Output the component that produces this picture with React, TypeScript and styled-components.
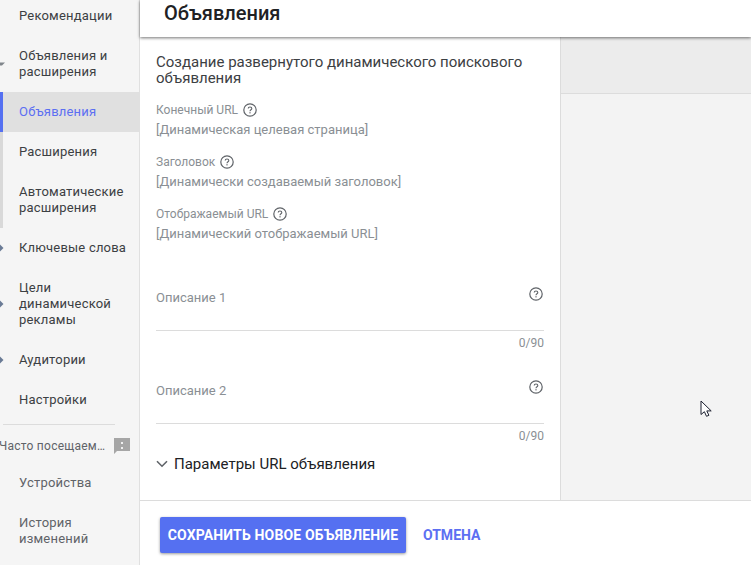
import React from "react";
import styled, { createGlobalStyle } from "styled-components";

const Global = createGlobalStyle`
  html, body {
    margin: 0;
    padding: 0;
    height: 100%;
    overflow: hidden;
    background: #fff;
    font-family: Roboto, "Liberation Sans", sans-serif;
  }
`;

const Page = styled.div`
  width: 751px;
  height: 565px;
  display: flex;
  overflow: hidden;
  position: relative;
`;

const Sidebar = styled.nav`
  width: 139px;
  flex: none;
  background: #f5f5f5;
  border-right: 1px solid #e0e0e0;
  overflow: hidden;
`;

const NavList = styled.div`
  margin-top: -4px;
  display: flex;
  flex-direction: column;
`;

const NavItem = styled.div<{ $state?: "active" | "child"; $muted?: boolean }>`
  position: relative;
  padding: 12px 8px 12px 16px;
  font-size: 13px;
  line-height: 16px;
  letter-spacing: 0.2px;
  color: ${(p) => (p.$state === "active" ? "#5c6ff2" : p.$muted ? "#5f6368" : "#3c4043")};
  background: ${(p) => (p.$state === "active" ? "#e0e0e0" : "transparent")};
  border-left: 3px solid
    ${(p) => (p.$state === "active" ? "#5570f1" : p.$state === "child" ? "#d9d9d9" : "transparent")};
`;

const Caret = styled.svg`
  position: absolute;
  left: -3px;
  top: 50%;
  margin-top: -5px;
`;

const Divider = styled.div`
  height: 1px;
  margin: 4px 24px 0 3px;
  background: #dcdcdc;
`;

const FrequentRow = styled.div`
  height: 38px;
  box-sizing: border-box;
  display: flex;
  align-items: center;
  justify-content: space-between;
  padding: 4px 9px 0 0;
  font-size: 12px;
  letter-spacing: 0.25px;
  color: #5f6368;
  white-space: nowrap;
`;

const FrequentLabel = styled.span`
  margin-left: -1px;
`;

const Main = styled.div`
  flex: 1;
  min-width: 0;
  display: flex;
  flex-direction: column;
`;

const Header = styled.header`
  height: 37px;
  flex: none;
  display: flex;
  align-items: center;
  padding: 0 0 12px 24px;
  box-sizing: border-box;
  background: #fff;
  box-shadow: 0 1px 3px rgba(0, 0, 0, 0.55);
  position: relative;
  z-index: 1;
  font-size: 20px;
  font-weight: 500;
  color: #202124;
`;

const Body = styled.div`
  flex: 1;
  min-height: 0;
  display: flex;
`;

const Form = styled.section`
  width: 421px;
  flex: none;
  box-sizing: border-box;
  padding: 17px 16px 0;
  border-right: 1px solid #dcdcdc;
  background: #fff;
`;

const Title = styled.h2`
  margin: 0 0 15px;
  font-size: 15px;
  line-height: 16px;
  font-weight: 400;
  color: #3c4043;
`;

const StaticField = styled.div`
  height: 52px;
`;

const FieldLabel = styled.div`
  height: 18px;
  display: flex;
  align-items: center;
  gap: 5px;
  font-size: 12px;
  color: #8a8f94;
`;

const FieldValue = styled.div`
  margin-top: 3px;
  font-size: 13px;
  line-height: 16px;
  color: #8a8f94;
`;

const Description = styled.div<{ $first?: boolean }>`
  margin-top: ${(p) => (p.$first ? "23px" : "0")};
  padding-top: ${(p) => (p.$first ? "0" : "23px")};
`;

const InputLine = styled.div`
  height: 51px;
  box-sizing: border-box;
  display: flex;
  justify-content: space-between;
  align-items: flex-start;
  border-bottom: 1px solid #dcdcdc;
  font-size: 13px;
  color: #8a8f94;
  padding-top: 9px;
  line-height: 18px;
`;

const HelpSlot = styled.span`
  margin-top: -2px;
  margin-right: 1px;
  display: flex;
`;

const Counter = styled.div`
  margin-top: 5px;
  text-align: right;
  font-size: 12px;
  line-height: 14px;
  color: #8a8f94;
`;

const Expander = styled.div`
  margin-top: 11px;
  display: flex;
  align-items: center;
  gap: 6px;
  font-size: 15px;
  line-height: 20px;
  color: #202124;
`;

const SidePanel = styled.aside`
  flex: 1;
  background: #f3f3f3;
`;

const SideBand = styled.div`
  height: 57px;
  background: #ececec;
  border-bottom: 1px solid #dcdcdc;
  box-sizing: border-box;
`;

const Footer = styled.footer`
  height: 65px;
  flex: none;
  box-sizing: border-box;
  display: flex;
  align-items: flex-start;
  gap: 17px;
  padding: 16px 0 0 20px;
  border-top: 1px solid #dcdcdc;
  background: #fff;
`;

const SaveButton = styled.button`
  height: 36px;
  width: 246px;
  padding: 0;
  border: 0;
  border-radius: 2px;
  background: #5570f1;
  color: #fff;
  font: 700 14px Roboto, sans-serif;
  letter-spacing: 0.15px;
  text-transform: uppercase;
  box-shadow: 0 1px 3px rgba(0, 0, 0, 0.4);
`;

const CancelButton = styled.button`
  height: 36px;
  padding: 0;
  border: 0;
  background: transparent;
  color: #5c6ff2;
  font: 700 14px Roboto, sans-serif;
  text-transform: uppercase;
`;

const Cursor = styled.svg`
  position: absolute;
  left: 700px;
  top: 400px;
`;

function HelpIcon() {
  return (
    <svg width="14" height="14" viewBox="0 0 14 14" fill="none">
      <circle cx="7" cy="7" r="6.2" stroke="#5f6368" strokeWidth="1.2" />
      <path
        d="M5.2 5.6C5.2 4.6 6 4 7 4s1.8.6 1.8 1.5C8.8 6.8 7 6.8 7 8.3"
        stroke="#5f6368"
        strokeWidth="1.1"
      />
      <rect x="6.4" y="9.2" width="1.2" height="1.2" fill="#5f6368" />
    </svg>
  );
}

function RightCaret() {
  return (
    <Caret width="4" height="10" viewBox="0 0 4 10">
      <path d="M0 1.5L3.5 5 0 8.5z" fill="#6a7b96" />
    </Caret>
  );
}

function DownCaret() {
  return (
    <Caret width="6" height="10" viewBox="0 0 6 10">
      <path d="M0 3.5h5L2 6.5H0z" fill="#80868b" />
    </Caret>
  );
}

export default function App() {
  return (
    <Page>
      <Global />
      <Sidebar>
        <NavList>
          <NavItem>Рекомендации</NavItem>
          <NavItem>
            <DownCaret />
            Объявления и расширения
          </NavItem>
          <NavItem $state="active">Объявления</NavItem>
          <NavItem $state="child">Расширения</NavItem>
          <NavItem $state="child">Автоматические расширения</NavItem>
          <NavItem>
            <RightCaret />
            Ключевые слова
          </NavItem>
          <NavItem>
            <RightCaret />
            Цели динамической рекламы
          </NavItem>
          <NavItem>
            <RightCaret />
            Аудитории
          </NavItem>
          <NavItem>Настройки</NavItem>
          <Divider />
          <FrequentRow>
            <FrequentLabel>Часто посещаем…</FrequentLabel>
            <svg width="16" height="16" viewBox="0 0 16 16">
              <path d="M0 0h16v13H3l-3 3z" fill="#a6a6a6" />
              <rect x="7" y="4" width="2" height="2" fill="#f0f0f0" />
              <rect x="7" y="9" width="2" height="2" fill="#f0f0f0" />
            </svg>
          </FrequentRow>
          <NavItem $muted>Устройства</NavItem>
          <NavItem $muted>История изменений</NavItem>
        </NavList>
      </Sidebar>
      <Main>
        <Header>Объявления</Header>
        <Body>
          <Form>
            <Title>Создание развернутого динамического поискового объявления</Title>
            <StaticField>
              <FieldLabel>
                Конечный URL <HelpIcon />
              </FieldLabel>
              <FieldValue>[Динамическая целевая страница]</FieldValue>
            </StaticField>
            <StaticField>
              <FieldLabel>
                Заголовок <HelpIcon />
              </FieldLabel>
              <FieldValue>[Динамически создаваемый заголовок]</FieldValue>
            </StaticField>
            <StaticField>
              <FieldLabel>
                Отображаемый URL <HelpIcon />
              </FieldLabel>
              <FieldValue>[Динамический отображаемый URL]</FieldValue>
            </StaticField>
            <Description $first>
              <InputLine>
                Описание 1
                <HelpSlot>
                  <HelpIcon />
                </HelpSlot>
              </InputLine>
              <Counter>0/90</Counter>
            </Description>
            <Description>
              <InputLine>
                Описание 2
                <HelpSlot>
                  <HelpIcon />
                </HelpSlot>
              </InputLine>
              <Counter>0/90</Counter>
            </Description>
            <Expander>
              <svg width="12" height="8" viewBox="0 0 12 8" fill="none">
                <path d="M1 1.2l5 5 5-5" stroke="#5f6368" strokeWidth="1.6" />
              </svg>
              Параметры URL объявления
            </Expander>
          </Form>
          <SidePanel>
            <SideBand />
          </SidePanel>
        </Body>
        <Footer>
          <SaveButton>Сохранить новое объявление</SaveButton>
          <CancelButton>Отмена</CancelButton>
        </Footer>
      </Main>
      <Cursor width="13" height="20" viewBox="0 0 13 20">
        <path
          d="M1 1v13.5l3.4-2.8 2.1 4.6 2.4-1-2.1-4.4H11.2z"
          fill="#fff"
          stroke="#1c2030"
          strokeWidth="1"
        />
      </Cursor>
    </Page>
  );
}
